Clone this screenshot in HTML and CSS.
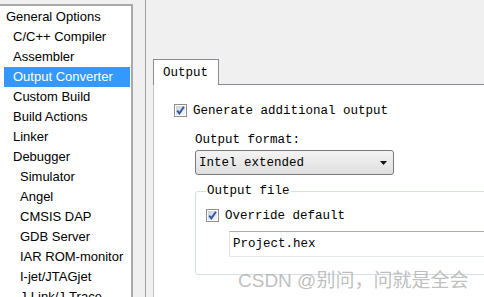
FILE: index.html
```html
<!DOCTYPE html>
<html lang="en">
<head>
  <meta charset="UTF-8">
  <title>Options - Output Converter</title>
  <link rel="stylesheet" href="styles.css">
</head>
<body>

  <div class="window">
    <!-- Category tree -->
    <ul class="tree">
      <li class="node">General Options</li>
      <li class="node sub">C/C++ Compiler</li>
      <li class="node sub">Assembler</li>
      <li class="node sub selected">Output Converter</li>
      <li class="node sub">Custom Build</li>
      <li class="node sub">Build Actions</li>
      <li class="node sub">Linker</li>
      <li class="node sub">Debugger</li>
      <li class="node leaf">Simulator</li>
      <li class="node leaf">Angel</li>
      <li class="node leaf">CMSIS DAP</li>
      <li class="node leaf">GDB Server</li>
      <li class="node leaf">IAR ROM-monitor</li>
      <li class="node leaf">I-jet/JTAGjet</li>
      <li class="node leaf">J-Link/J-Trace</li>
    </ul>

    <div class="splitter"></div>

    <!-- Options page -->
    <div class="page">
      <div class="tabs">
        <div class="tab">Output</div>
        <div class="tab-fill"></div>
      </div>

      <div class="panel">
        <div class="check">
          <svg class="box" width="13" height="13" viewBox="0 0 13 13">
            <defs>
              <linearGradient id="cb1" x1="0" y1="0" x2="1" y2="1">
                <stop offset="0" stop-color="#cbcfd5"/>
                <stop offset="1" stop-color="#f6f6f6"/>
              </linearGradient>
            </defs>
            <rect x="0.5" y="0.5" width="12" height="12" fill="#fff" stroke="#8e8f8f"/>
            <rect x="2" y="2" width="9" height="9" fill="url(#cb1)"/>
            <path d="M3.2 6.6 L5.4 9.4 L9.9 2.8" fill="none" stroke="#2c56a6" stroke-width="1.9"/>
          </svg>
          <span>Generate additional output</span>
        </div>

        <div class="field-label">Output format:</div>
        <div class="select">
          <span>Intel extended</span>
          <svg width="7" height="4" viewBox="0 0 7 4"><path d="M0 0h7L3.5 4z" fill="#111"/></svg>
        </div>

        <fieldset class="group">
          <legend>Output file</legend>
          <div class="check">
            <svg class="box" width="13" height="13" viewBox="0 0 13 13">
              <defs>
                <linearGradient id="cb2" x1="0" y1="0" x2="1" y2="1">
                  <stop offset="0" stop-color="#cbcfd5"/>
                  <stop offset="1" stop-color="#f6f6f6"/>
                </linearGradient>
              </defs>
              <rect x="0.5" y="0.5" width="12" height="12" fill="#fff" stroke="#8e8f8f"/>
              <rect x="2" y="2" width="9" height="9" fill="url(#cb2)"/>
              <path d="M3.2 6.6 L5.4 9.4 L9.9 2.8" fill="none" stroke="#2c56a6" stroke-width="1.9"/>
            </svg>
            <span>Override default</span>
          </div>
          <div class="textbox">Project.hex</div>
        </fieldset>
      </div>
    </div>
  </div>

  <div class="watermark">CSDN @别问，问就是全会</div>

</body>
</html>
```

FILE: styles.css
```css
body {
  margin: 0;
  width: 484px;
  height: 297px;
  overflow: hidden;
  position: relative;
  background: #f0f0f0;
  color: #000;
  font-family: "Liberation Sans", Arial, sans-serif;
}

.window {
  display: flex;
  height: 297px;
}

/* tree */
.tree {
  list-style: none;
  margin: 4px 0 0;
  padding: 1px 0 0;
  width: 131px;
  flex-shrink: 0;
  background: #fff;
  border-top: 2px solid #a9a9a9;
  border-right: 2px solid #a9a9a9;
  font-size: 13px;
}

.node {
  height: 20px;
  line-height: 20px;
  margin: 0 1px 0 4px;
  padding-left: 2px;
  white-space: nowrap;
}

.sub { padding-left: 9px; }
.leaf { padding-left: 16px; }

.selected {
  background: #3399ff;
  color: #fff;
}

.splitter {
  width: 1px;
  margin-left: 12px;
  flex-shrink: 0;
  background: #a0a0a0;
}

/* page */
.page {
  flex: 1;
  margin-left: 7px;
  padding-top: 59px;
  display: flex;
  flex-direction: column;
  font-family: "Liberation Mono", "Courier New", monospace;
  font-size: 12.5px;
}

.tabs {
  display: flex;
  height: 26px;
}

.tab {
  width: 55px;
  padding: 2px 0 0 9px;
  line-height: 23px;
  background: #fff;
  border: 1px solid #898c95;
  border-bottom: none;
}

.tab-fill {
  flex: 1;
  border-bottom: 1px solid #898c95;
}

.panel {
  flex: 1;
  background: #fff;
  border-left: 1px solid #c4c4c4;
  padding: 19px 0 0 20px;
  overflow: hidden;
}

.check {
  display: flex;
  align-items: center;
  gap: 6px;
  height: 13px;
  white-space: nowrap;
}

.box { flex-shrink: 0; }

.field-label {
  margin: 16px 0 0 21px;
  line-height: 15px;
}

.select {
  margin: 2px 0 0 21px;
  width: 188px;
  height: 23px;
  padding: 0 6px 0 3px;
  display: flex;
  align-items: center;
  justify-content: space-between;
  border: 1px solid #7a7a7a;
  border-radius: 3px;
  background: linear-gradient(#f4f4f4, #e9e9e9 50%, #dfdfdf);
}

.group {
  margin: 9px 0 0 21px;
  width: 320px;
  padding: 0 0 17px 10px;
  border: 1px solid #d5dfe5;
  border-radius: 3px;
}

.group legend {
  padding: 0 1px;
  line-height: 15px;
}

.group .check {
  margin-top: 10px;
}

.textbox {
  margin: 9px 0 0 23px;
  height: 24px;
  line-height: 24px;
  padding-left: 3px;
  border: 1px solid;
  border-color: #abadb3 #dbdfe6 #e3e9ef #e2e3ea;
}

/* watermark */
.watermark {
  position: absolute;
  left: 238px;
  top: 265px;
  font-family: "Liberation Sans", "Noto Sans CJK SC", sans-serif;
  font-size: 19px;
  color: rgba(170, 170, 170, 0.75);
  white-space: nowrap;
}
```
